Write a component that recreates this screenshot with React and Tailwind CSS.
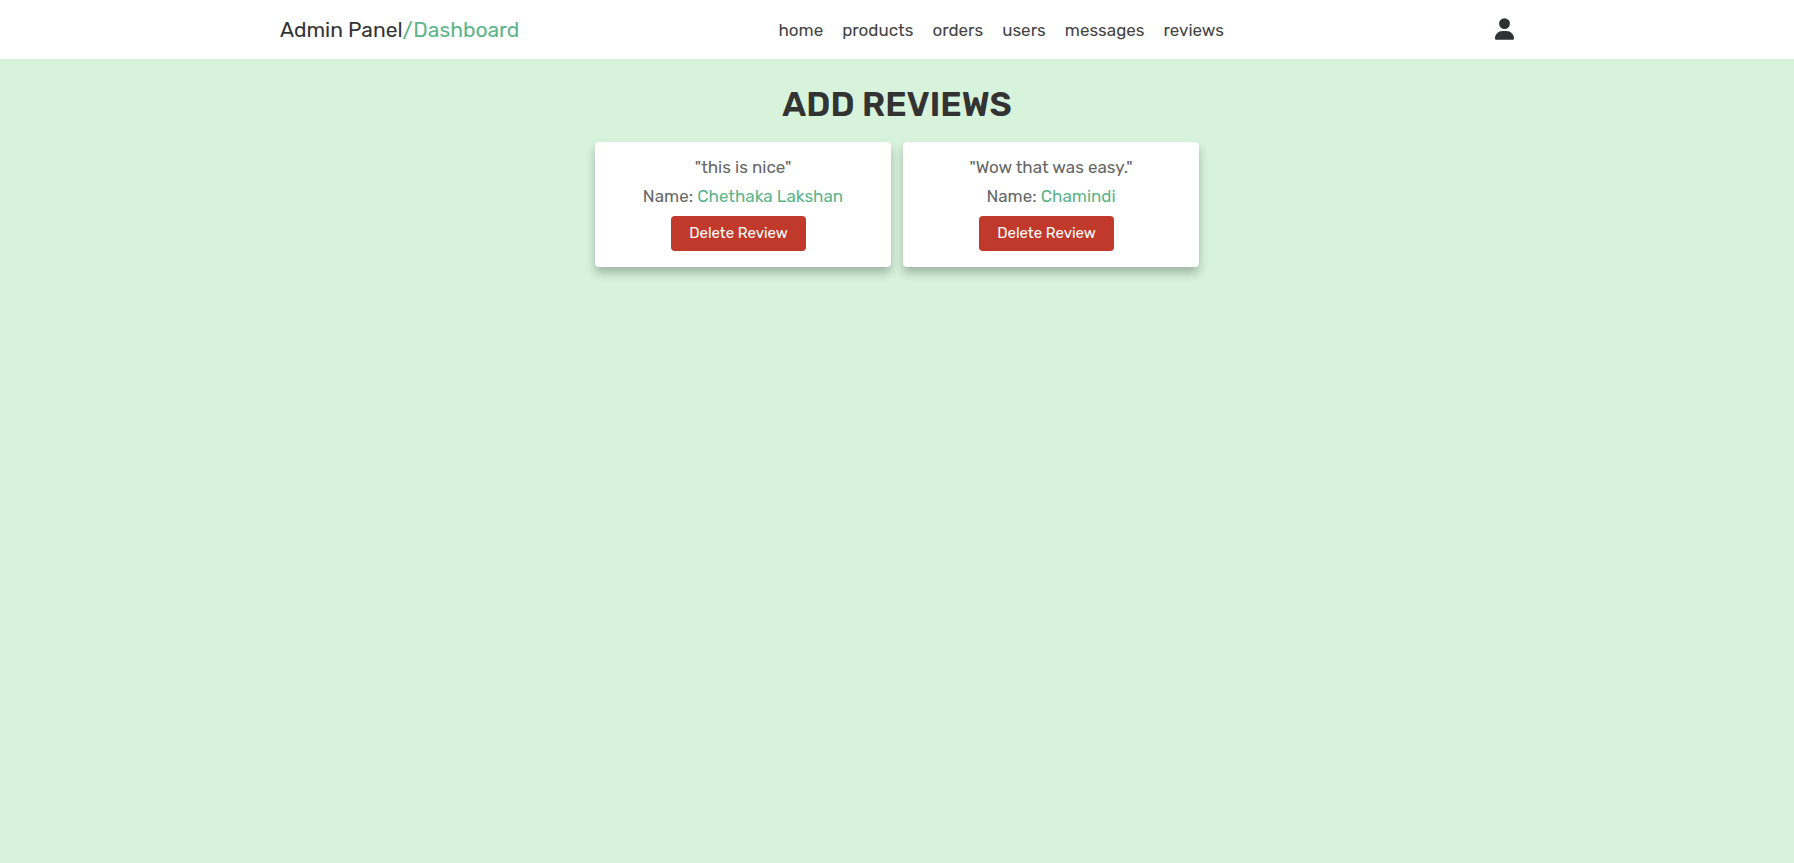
import { FaUser } from "react-icons/fa6";

const links = ["home", "products", "orders", "users", "messages", "reviews"];

const reviews = [
  { id: 1, text: "this is nice", name: "Chethaka Lakshan" },
  { id: 2, text: "Wow that was easy.", name: "Chamindi" },
];

function Header() {
  return (
    <header className="bg-white">
      <div className="mx-auto flex h-[59px] max-w-[1234px] items-center justify-between">
        <a href="#dashboard" className="text-[21px] leading-7 text-[#333]">
          Admin Panel<span className="text-[#5bb58a]">/Dashboard</span>
        </a>
        <nav className="flex gap-[19px]">
          {links.map((link) => (
            <a key={link} href={`#${link}`} className="text-[17px] leading-6 text-[#444]">
              {link}
            </a>
          ))}
        </nav>
        <button type="button" aria-label="Account" className="pb-[2px] pl-3 text-[#2f3233]">
          <FaUser className="h-[22px] w-[19px]" />
        </button>
      </div>
    </header>
  );
}

function ReviewCard({ text, name }) {
  return (
    <article className="flex w-[296px] flex-col items-center rounded bg-white px-4 pt-[11px] pb-4 text-[17px] text-[#666] shadow-[0_6px_10px_rgba(0,0,0,0.25)]">
      <p className="leading-7">"{text}"</p>
      <p className="leading-[30px]">
        Name: <span className="text-[#5bb58a]">{name}</span>
      </p>
      <button
        type="button"
        className="mt-[5px] mr-[9px] h-[35px] rounded bg-[#c0392b] px-[18px] text-[15px] text-white"
      >
        Delete Review
      </button>
    </article>
  );
}

export default function App() {
  return (
    <div className="min-h-screen bg-[#d7f3dc] font-['Rubik','Roboto',sans-serif]">
      <Header />
      <main className="px-4 pt-6">
        <h1 className="text-center text-[34px] leading-[43px] font-semibold text-[#333] uppercase">
          Add Reviews
        </h1>
        <section className="mt-4 flex flex-wrap justify-center gap-3">
          {reviews.map((review) => (
            <ReviewCard key={review.id} text={review.text} name={review.name} />
          ))}
        </section>
      </main>
    </div>
  );
}
